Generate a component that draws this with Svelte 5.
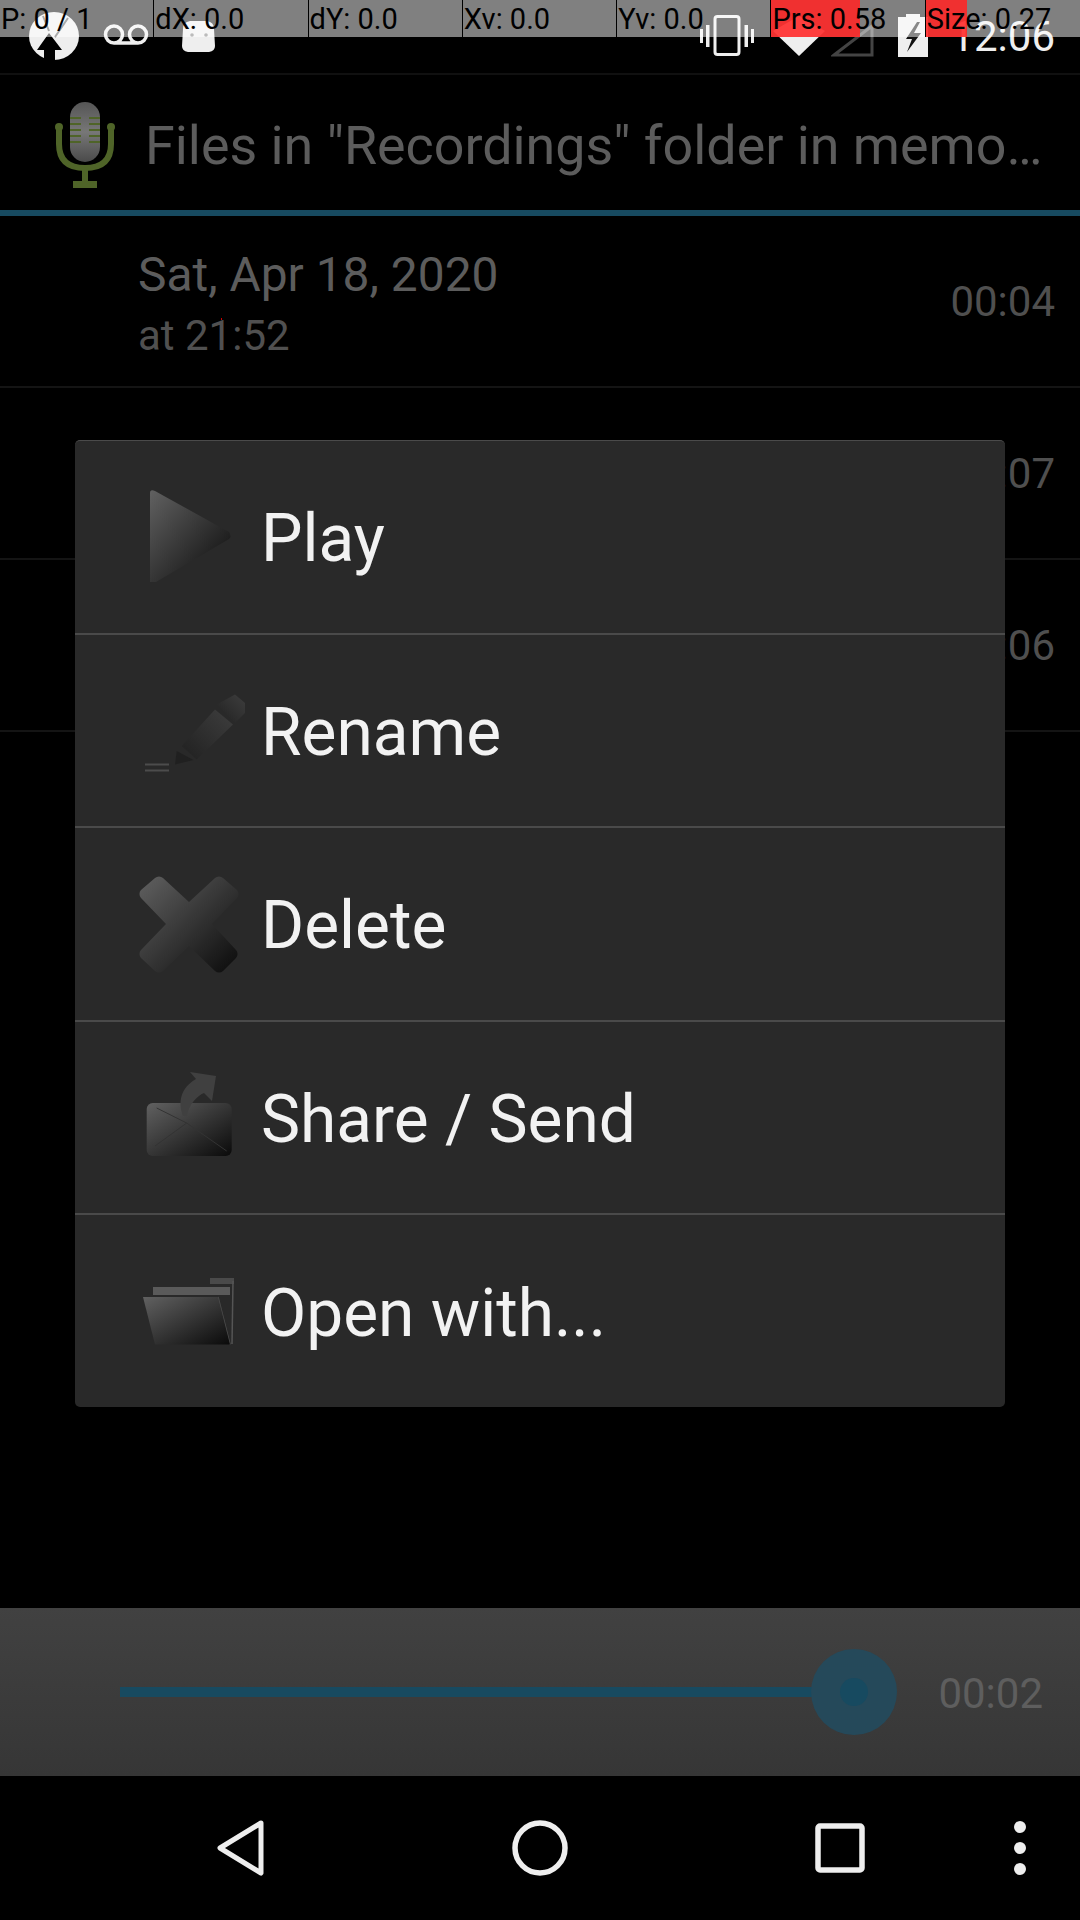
<script>
  const cells = [
    { t: 'P: 0 / 1' },
    { t: 'dX: 0.0' },
    { t: 'dY: 0.0' },
    { t: 'Xv: 0.0' },
    { t: 'Yv: 0.0' },
    { t: 'Prs: 0.58', red: 58 },
    { t: 'Size: 0.27', red: 27 }
  ];
  const rows = [
    { date: 'Sat, Apr 18, 2020', time: 'at 21:52', dur: '00:04' },
    { date: 'Wed, Mar 25, 2020', time: '', dur: '00:07' },
    { date: '', time: '', dur: '00:06' }
  ];
  const menu = ['Play', 'Rename', 'Delete', 'Share / Send', 'Open with...'];
</script>

<div class="screen">
  <header class="status">
    <div class="left-icons">
      <svg class="i-app" viewBox="0 0 50 48">
        <ellipse cx="25" cy="24" rx="25" ry="24" fill="#eee" />
        <path d="M14 4 L20 19 M26 25 L39 6" fill="none" stroke="#555" stroke-width="2" />
        <path d="M20 21 L33 38 H26 V48 H15 V38 H8 Z" fill="#000" />
      </svg>
      <svg class="i-vm" viewBox="0 0 46 21">
        <path d="M11 19 H35 M11 19 a8.5 8.5 0 1 1 0 -17 a8.5 8.5 0 0 1 0 17 Z M35 19 a8.5 8.5 0 1 1 0 -17 a8.5 8.5 0 0 1 0 17 Z" fill="none" stroke="#eee" stroke-width="3.5" />
      </svg>
      <svg class="i-droid" viewBox="0 0 33 36">
        <path d="M1 12 Q1 5 8 4 H25 Q32 5 32 12 L33 29 Q33 34 27 35 H6 Q0 34 0 29 Z" fill="#eee" />
        <circle cx="10" cy="18" r="1.8" fill="#777" /><circle cx="24" cy="18" r="1.8" fill="#777" />
      </svg>
    </div>
    <div class="right-icons">
      <svg class="i-vib" viewBox="0 0 54 41">
        <rect x="15" y="1.5" width="24" height="38" rx="2.5" fill="none" stroke="#eee" stroke-width="3" />
        <path d="M0 14 H3 V28 H0 Z M6 10 H9.5 V32 H6 Z M44.500 10 H48 V32 H44.500 Z M51 14 H54 V28 H51 Z" fill="#eee" />
      </svg>
      <svg class="i-wifi" viewBox="0 0 52 40"><path d="M0 15 L26 0 L52 15 L26 40 Z" fill="#eee" /></svg>
      <svg class="i-sig" viewBox="0 0 43 34"><path d="M3 32 L41 3 V32 Z" fill="none" stroke="#444" stroke-width="3" /></svg>
      <svg class="i-bat" viewBox="0 0 30 43">
        <path d="M8 0 H22 V3 H30 V43 H0 V3 H8 Z" fill="#eee" />
        <path d="M19 8 L8 25 H14 L9 38 L23 19 H16 L22 8 Z" fill="#111" />
      </svg>
      <span class="clock">12:06</span>
    </div>
  </header>

  <div class="action">
    <svg class="mic" viewBox="0 0 60 87">
      <defs>
        <linearGradient id="micBody" x1="0" y1="0" x2="0" y2="1">
          <stop offset="0" stop-color="#555" /><stop offset=".5" stop-color="#777" /><stop offset="1" stop-color="#4a4a4a" />
        </linearGradient>
      </defs>
      <rect x="15" y="0" width="30" height="60" rx="15" fill="url(#micBody)" />
      <path d="M15 16 H26 M34 16 H45 M15 22 H26 M34 22 H45 M15 28 H26 M34 28 H45 M15 34 H26 M34 34 H45 M15 40 H26 M34 40 H45" stroke="#4f6428" stroke-width="2" />
      <path d="M4 26 V42 Q4 66 30 66 Q56 66 56 42 V26" fill="none" stroke="#4f6428" stroke-width="6" />
      <circle cx="4" cy="25" r="4" fill="#4f6428" /><circle cx="56" cy="25" r="4" fill="#4f6428" />
      <rect x="27" y="64" width="6" height="16" fill="#4f6428" />
      <rect x="18" y="79" width="24" height="7" fill="#4f6428" />
    </svg>
    <span class="title">Files in "Recordings" folder in memo…</span>
  </div>
  <div class="rule"></div>

  <main class="list">
    {#each rows as r}
      <div class="row">
        <div class="meta">
          {#if r.date}<div class="date">{r.date}</div>{/if}
          {#if r.time}<div class="time">{r.time}</div>{/if}
        </div>
        <div class="dur">{r.dur}</div>
      </div>
    {/each}
  </main>

  <section class="player">
    <div class="track">
      <div class="halo"><div class="thumb"></div></div>
    </div>
    <span class="pos">00:02</span>
  </section>

  <nav class="nav">
    <svg class="n-back" viewBox="0 0 48 56"><path d="M44 3 L3 28 L44 53 Z" fill="none" stroke="#eee" stroke-width="5" stroke-linejoin="round" /></svg>
    <svg class="n-home" viewBox="0 0 56 56"><circle cx="28" cy="28" r="25" fill="none" stroke="#eee" stroke-width="5.500" /></svg>
    <svg class="n-rec" viewBox="0 0 50 50"><rect x="3" y="3" width="44" height="44" rx="2" fill="none" stroke="#eee" stroke-width="5.500" /></svg>
    <svg class="n-more" viewBox="0 0 12 54"><circle cx="6" cy="6" r="6" fill="#eee" /><circle cx="6" cy="27" r="6" fill="#eee" /><circle cx="6" cy="48" r="6" fill="#eee" /></svg>
  </nav>

  <div class="dialog">
    {#each menu as label, i}
      <div class="item">
        <svg class="ico" viewBox="0 0 120 120">
          <defs>
            <linearGradient id={'g' + i} x1="0" y1="0" x2="1" y2="1">
              <stop offset="0" stop-color="#616161" /><stop offset="1" stop-color="#0a0a0a" />
            </linearGradient>
            <linearGradient id={'p' + i} x1="1" y1="0" x2="0" y2="1">
              <stop offset="0" stop-color="#3e3e3e" /><stop offset="1" stop-color="#202020" />
            </linearGradient>
          </defs>
          {#if i === 0}
            <path d="M21 16 Q21 12 26 14 L100 55 Q103 60 100 62 L27 105 H21 Z" fill={'url(#g' + i + ')'} />
          {:else if i === 1}
            <path d="M87.700 34.500 L106 24.500 L116 33 V43 L106 53 Z" fill={'url(#p' + i + ')'} />
            <path d="M86 39.500 L104 54.500 L67.700 89.500 L52.700 76 Z" fill={'url(#p' + i + ')'} />
            <path d="M47.700 81 L46 94.500 L64.300 90 Z" fill="#202020" />
            <path d="M16 94.500 H40 M16 100.500 H40" stroke="#4c4c4c" stroke-width="2" />
          {:else if i === 2}
            <path d="M26 14 a6 6 0 0 1 8 0 L60 38 L86 14 a6 6 0 0 1 8 0 L108 26 a6 6 0 0 1 0 8 L83 60 L107 86 a6 6 0 0 1 0 8 L94 107 a6 6 0 0 1 -8 0 L60 82 L34 107 a6 6 0 0 1 -8 0 L12 94 a6 6 0 0 1 0 -8 L37 60 L12 34 a6 6 0 0 1 0 -8 Z" fill={'url(#g' + i + ')'} />
          {:else if i === 3}
            <rect x="17.700" y="45" width="85" height="53" rx="6" fill={'url(#g' + i + ')'} />
            <path d="M27.700 50 L57.700 65 L97.700 93 M26 88 L57.700 65" fill="none" stroke="#333" stroke-width="1" />
            <path d="M54 58 C49 45 51 30 67 21 L61 14 L87 18 L83 43 L75 35 C68 38 60 46 58 58 Z" fill="#404040" />
          {:else}
            <path d="M81 27 H105 V33 H81 Z" fill="#4a4a4a" />
            <path d="M104 30 L103 93" stroke="#555" stroke-width="1.500" />
            <path d="M24 36 H101 V44 H24 Z" fill="#5a5a5a" />
            <path d="M89 46 L101 93.500" stroke="#4c4c4c" stroke-width="1.500" fill="none" />
            <path d="M14 46 H89 L101 93.500 H26 Z" fill={'url(#g' + i + ')'} />
          {/if}
        </svg>
        <span class="label">{label}</span>
      </div>
    {/each}
  </div>

  <div class="overlay">
    {#each cells as c}
      <div class="cell">
        {#if c.red}<i class="bar" style="width:{c.red}%"></i>{/if}
        <span>{c.t}</span>
      </div>
    {/each}
  </div>
  <i class="trace"></i>
</div>

<style>
  :global(body) { margin: 0; background: #000; }
  .screen {
    position: relative;
    width: 1080px;
    height: 1920px;
    overflow: hidden;
    background: #000;
    display: flex;
    flex-direction: column;
    font-family: Roboto, "Liberation Sans", sans-serif;
  }
  svg { display: block; flex: none; }

  .status {
    height: 73px;
    flex: none;
    display: flex;
    justify-content: space-between;
    border-bottom: 2px solid #101010;
  }
  .left-icons { display: flex; align-items: flex-start; padding-left: 29px; }
  .i-app { width: 50px; height: 48px; margin-top: 12px; }
  .i-vm { width: 46px; height: 21px; margin: 24px 0 0 24px; }
  .i-droid { width: 33px; height: 36px; margin: 17px 0 0 33px; }
  .right-icons { display: flex; align-items: flex-start; padding-right: 25px; }
  .i-vib { width: 54px; height: 41px; margin-top: 15px; }
  .i-wifi { width: 52px; height: 40px; margin: 16px 0 0 19px; }
  .i-sig { width: 43px; height: 34px; margin: 23px 0 0 6px; }
  .i-bat { width: 30px; height: 43px; margin: 14px 0 0 24px; }
  .clock { font-size: 42px; line-height: 48px; margin: 13px 0 0 22px; color: #eee; }

  .action { height: 135px; flex: none; display: flex; align-items: center; padding-left: 55px; }
  .mic { width: 60px; height: 87px; margin-top: 5px; }
  .title { font-size: 53.8px; color: #5c5c5c; margin: 6px 0 0 30px; white-space: nowrap; }
  .rule { height: 6px; flex: none; background: #174a60; }

  .list { flex: 1; min-height: 0; }
  .row {
    box-sizing: border-box;
    height: 172px;
    border-bottom: 2px solid #141414;
    display: flex;
    align-items: center;
    justify-content: space-between;
    padding: 0 25px 0 138px;
  }
  .meta { margin-top: 5px; }
  .date { font-size: 47.9px; line-height: 60px; color: #5c5c5c; }
  .time { font-size: 42px; line-height: 54px; color: #505050; margin-top: 4px; }
  .dur { font-size: 42px; color: #4f4f4f; }

  .player {
    height: 168px;
    flex: none;
    background: linear-gradient(#414141, #363636);
    display: flex;
    align-items: center;
    padding: 0 37px 0 120px;
  }
  .track { position: relative; width: 735px; height: 10px; background: #174a60; }
  .halo {
    position: absolute;
    right: -43px;
    top: -38px;
    width: 86px;
    height: 86px;
    border-radius: 50%;
    background: #25495a;
    display: flex;
    align-items: center;
    justify-content: center;
  }
  .thumb { width: 28px; height: 28px; border-radius: 50%; background: #174a60; }
  .pos { font-size: 42px; color: #5e5e5e; margin: 2px 0 0 84px; }

  .nav { height: 144px; flex: none; display: flex; align-items: center; padding-left: 217px; }
  .n-back { width: 48px; height: 56px; }
  .n-home { width: 56px; height: 56px; margin-left: 247px; }
  .n-rec { width: 50px; height: 50px; margin-left: 247px; }
  .n-more { width: 12px; height: 54px; margin-left: 149px; }

  .dialog {
    position: absolute;
    left: 75px;
    top: 440px;
    width: 930px;
    height: 967px;
    box-sizing: border-box;
    background: #292929;
    border-radius: 5px;
    border-top: 1px solid #4a4a4a;
    display: flex;
    flex-direction: column;
  }
  .item {
    flex: 1;
    display: flex;
    align-items: center;
    padding-left: 54px;
    border-bottom: 2px solid #4a4a4a;
  }
  .item:last-child { border-bottom: 0; }
  .ico { width: 120px; height: 120px; }
  .label { font-size: 65.8px; color: #f2f2f2; margin: 4px 0 0 12px; }

  .overlay {
    position: absolute;
    left: 0;
    top: 0;
    width: 1080px;
    height: 37px;
    display: grid;
    grid-template-columns: repeat(7, 1fr);
    background: rgba(255, 255, 255, .5);
  }
  .cell {
    position: relative;
    box-sizing: border-box;
    height: 37px;
    border-right: 1px solid #000;
    font-size: 29px;
    line-height: 38px;
    color: #000;
    white-space: nowrap;
    padding-left: 1px;
  }
  .cell:last-child { border-right: 0; }
  .cell span { position: relative; }
  .bar { position: absolute; left: 0; top: 0; height: 37px; background: rgba(255, 36, 36, .88); }
  .trace { position: absolute; left: 221px; top: 318px; width: 1px; height: 2px; background: #c00; }
</style>
